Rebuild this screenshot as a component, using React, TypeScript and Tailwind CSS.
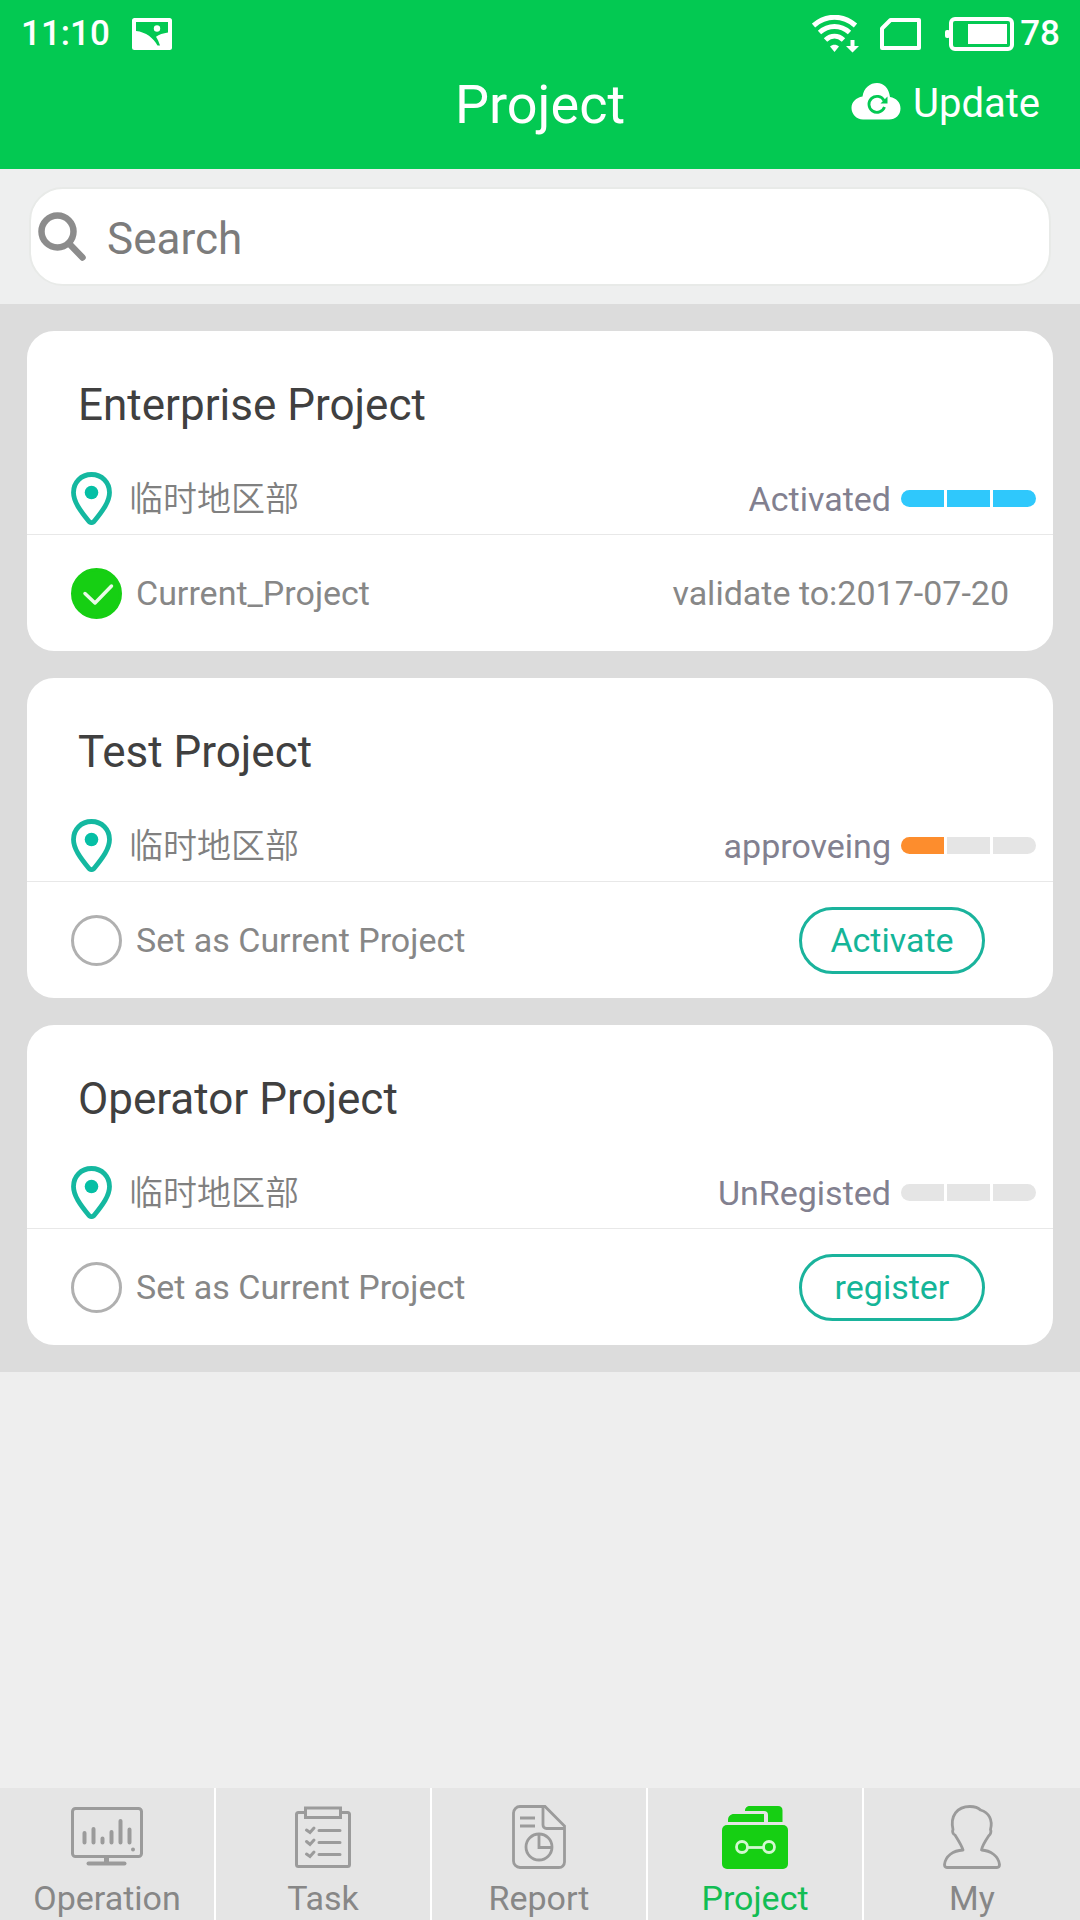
import { useState } from "react";

type Project = {
  id: string;
  name: string;
  region: string;
  status: string;
  segments: string[];
  validTo?: string;
  action?: string;
};

const projects: Project[] = [
  {
    id: "enterprise",
    name: "Enterprise Project",
    region: "临时地区部",
    status: "Activated",
    segments: ["bg-[#2fc8fc]", "bg-[#2fc8fc]", "bg-[#2fc8fc]"],
    validTo: "2017-07-20",
  },
  {
    id: "test",
    name: "Test Project",
    region: "临时地区部",
    status: "approveing",
    segments: ["bg-[#fd8d2d]", "bg-[#e5e5e5]", "bg-[#e5e5e5]"],
    action: "Activate",
  },
  {
    id: "operator",
    name: "Operator Project",
    region: "临时地区部",
    status: "UnRegisted",
    segments: ["bg-[#e5e5e5]", "bg-[#e5e5e5]", "bg-[#e5e5e5]"],
    action: "register",
  },
];

function PhotoIcon() {
  return (
    <svg width="40" height="32" viewBox="0 0 40 32" aria-hidden="true">
      <rect width="40" height="32" rx="2.5" fill="#fff" />
      <path d="M4 4h32v10.500c-5 .7-9 2-12 4.200 1.600 2.500 3 5.500 4 8.800h-2.500C21.500 20 14 14 4 13z" fill="#03c952" />
      <circle cx="25" cy="10.500" r="3.200" fill="#fff" />
    </svg>
  );
}

function WifiIcon() {
  return (
    <svg width="48" height="38" viewBox="0 0 48 38" fill="none" stroke="#fff" aria-hidden="true">
      <path d="M1.500 10.500C14 -0.500 31 -0.500 43.500 10.500" strokeWidth="5" />
      <path d="M7.500 17.500c9-8 21-8 30 0" strokeWidth="5" />
      <path d="M13.500 25c5.500-5 12.500-5 18 0" strokeWidth="5" />
      <path d="M18 31.500c2.500-2.500 6.500-2.500 9 0L22.500 37z" fill="#fff" stroke="none" />
      <path d="M38.500 25h4v6H47l-6.500 6.500L34 31h4.500z" fill="#fff" stroke="none" />
    </svg>
  );
}

function SimIcon() {
  return (
    <svg width="41" height="32" viewBox="0 0 41 32" fill="none" aria-hidden="true">
      <path d="M2 30V10.500L10.500 2H39v28z" stroke="#fff" strokeWidth="4" strokeLinejoin="round" />
    </svg>
  );
}

function BatteryIcon() {
  return (
    <svg width="69" height="34" viewBox="0 0 69 34" fill="none" aria-hidden="true">
      <rect x="6" y="2" width="61" height="30" rx="4" stroke="#fff" strokeWidth="4" />
      <rect y="13" width="5" height="8" rx="2" fill="#fff" />
      <rect x="23" y="7" width="39" height="20" fill="#fff" />
    </svg>
  );
}

function CloudRefreshIcon() {
  return (
    <svg className="mb-1" width="50" height="37" viewBox="0 0 50 37" fill="none" aria-hidden="true">
      <path d="M12 36.500h26c6.500 0 11.500-4.500 11.500-11 0-6-4-10.500-10.500-11.500C38 5.500 33 0 26 0S13 4.500 11.500 13.500C5 14.500.5 19 .5 25S5.500 36.500 12 36.500z" fill="#fff" />
      <path d="M33 17.500A8 8 0 1 0 33.500 24" stroke="#03c952" strokeWidth="2.800" />
      <path d="M29.500 20.500h7V13.500z" fill="#03c952" />
    </svg>
  );
}

function SearchIcon() {
  return (
    <svg className="shrink-0" width="48" height="50" viewBox="0 0 48 50" fill="none" stroke="#8c8c8c" aria-hidden="true">
      <circle cx="19.500" cy="19.500" r="16" strokeWidth="6.500" />
      <path d="M31 31.500L44.500 45.500" strokeWidth="6.500" strokeLinecap="round" />
    </svg>
  );
}

function PinIcon() {
  return (
    <svg width="41" height="53" viewBox="0 0 41 53" fill="none" aria-hidden="true">
      <path d="M20.500 2.500C10 2.500 2.500 10.500 2.500 20.500c0 9 6.500 18 15.500 29 1.500 1.500 3.500 1.500 5 0 9-11 15.500-20 15.500-29 0-10-7.500-18-18-18z" stroke="#14b8a0" strokeWidth="4.800" />
      <circle cx="20.500" cy="20.500" r="6.800" fill="#05bfa5" />
    </svg>
  );
}

function OperationIcon() {
  return (
    <svg width="72" height="60" viewBox="0 0 72 60" fill="none" stroke="#9b9b9b" aria-hidden="true">
      <rect x="1.500" y="1.500" width="69" height="48" rx="3" strokeWidth="3" />
      <path d="M13.500 26v9.500M22.500 22v13.500M31.500 31.500v4M40.500 25v10.500M49.500 14v21.500M58.500 22.500v13" strokeWidth="4" strokeLinecap="round" />
      <path d="M35.500 50v6" strokeWidth="5" />
      <path d="M17.500 56.500h36" strokeWidth="4" strokeLinecap="round" />
      <circle cx="62" cy="42.500" r="2" fill="#9b9b9b" stroke="none" />
    </svg>
  );
}

function TaskIcon() {
  return (
    <svg width="56" height="63" viewBox="0 0 56 63" fill="none" stroke="#9b9b9b" strokeWidth="3" aria-hidden="true">
      <path d="M10 6.500H3.500a2 2 0 0 0-2 2v50a2 2 0 0 0 2 2h49a2 2 0 0 0 2-2v-50a2 2 0 0 0-2-2H46" />
      <rect x="10.500" y="2" width="35" height="9.500" />
      <path d="M24 24.500h21M24 36.500h21M24 48.500h21" strokeLinecap="round" />
      <path d="M11.500 24l3.500 2.500 4-4.500M11.500 35.500L15 38.500l4-4.500M11.500 48l3.500 2.500 4-4.500" strokeLinecap="round" />
    </svg>
  );
}

function ReportIcon() {
  return (
    <svg width="54" height="64" viewBox="0 0 54 64" fill="none" stroke="#9b9b9b" strokeWidth="2.800" aria-hidden="true">
      <path d="M8 1.500h25L52.500 21v36a5.500 5.500 0 0 1-5.500 5.500H8A6.500 6.500 0 0 1 1.500 56V8A6.500 6.500 0 0 1 8 1.500z" />
      <path d="M31 1.500V20a3.500 3.500 0 0 0 3.500 3.500h18" />
      <path d="M8 13h15M8 21h15" />
      <circle cx="27" cy="42" r="13" />
      <path d="M27 29.500V42.500h13" />
    </svg>
  );
}

function ProjectIcon() {
  return (
    <svg width="66" height="64" viewBox="0 0 66 64" fill="none" aria-hidden="true">
      <path d="M23 6c0-3.500 2-5 5-5h28c3 0 4.500 1.500 4.500 4.500V17H46V10c0-3-1.500-4-4-4z" fill="#16cf13" />
      <path d="M6 17v-2c0-3.500 2.500-6 6-6h30v8z" fill="#16cf13" />
      <rect y="20" width="66" height="44" rx="5" fill="#16cf13" />
      <g stroke="#d2f8d0" strokeWidth="2.800">
        <circle cx="20" cy="42" r="5.500" />
        <circle cx="47" cy="42" r="5.500" />
        <path d="M25.500 42.500h16" />
      </g>
    </svg>
  );
}

function PersonIcon() {
  return (
    <svg width="58" height="64" viewBox="0 0 58 64" fill="none" stroke="#9b9b9b" strokeWidth="2.800" strokeLinejoin="round" aria-hidden="true">
      <path d="M20 45c-1.500-5-5-10-8-15-2-.5-3-3.500-2-5.500C7 11 14 1.500 27 1.500c5 0 8 1 10.500 3.500C46 7.500 50 15 47.500 24.500c1 2 0 5-1.500 6-3 4.500-6.500 9.500-7.500 14.500 9 .5 17 6 18 14.500 0 2-.5 3-2.500 3H4c-2 0-2.500-1-2.500-3C2.500 51 10 45.500 20 45z" />
    </svg>
  );
}

const tabs = [
  { label: "Operation", icon: OperationIcon },
  { label: "Task", icon: TaskIcon },
  { label: "Report", icon: ReportIcon },
  { label: "Project", icon: ProjectIcon },
  { label: "My", icon: PersonIcon },
];

function StatusBar() {
  return (
    <div className="flex h-[67px] items-center justify-between pr-5 pl-[21px] text-[35px] leading-10 font-medium">
      <div className="flex items-center gap-[22px]">
        <span>11:10</span>
        <PhotoIcon />
      </div>
      <div className="flex items-center">
        <WifiIcon />
        <span className="ml-5">
          <SimIcon />
        </span>
        <span className="mr-[6px] ml-6">
          <BatteryIcon />
        </span>
        <span>78</span>
      </div>
    </div>
  );
}

function StatusMeter({ segments }: { segments: string[] }) {
  return (
    <div className="flex h-[17px] w-[135px] gap-[3px] overflow-hidden rounded-full">
      {segments.map((color, index) => (
        <span key={index} className={`flex-1 ${color}`} />
      ))}
    </div>
  );
}

function ProjectCard({ project, current, onSelect }: { project: Project; current: boolean; onSelect: () => void }) {
  return (
    <article className="rounded-[27px] bg-white">
      <div className="border-b border-[#e8e8e8] pt-12 pb-[5px]">
        <h2 className="pl-[51px] text-[44px] leading-[52px] text-[#404040]">{project.name}</h2>
        <div className="mt-9 flex h-[62px] items-center justify-between pr-[17px] pl-11">
          <div className="flex items-center gap-[17px]">
            <PinIcon />
            <span className="pt-0.5 text-[34px] leading-10 font-[350] text-[#808080]">{project.region}</span>
          </div>
          <div className="flex items-center gap-[10px]">
            <span className="pt-0.5 text-[34px] leading-10 text-[#82808f]">{project.status}</span>
            <StatusMeter segments={project.segments} />
          </div>
        </div>
      </div>
      <div className="flex h-[116px] items-center justify-between pl-11 text-[34px] leading-10 text-[#878787]">
        <label className="flex items-center gap-[14px]">
          <span className="grid">
            <input
              type="radio"
              name="current-project"
              checked={current}
              onChange={onSelect}
              className="peer col-start-1 row-start-1 size-[51px] appearance-none rounded-full border-3 border-[#b0b0b0] checked:border-[#16cf13] checked:bg-[#16cf13]"
            />
            <svg className="pointer-events-none col-start-1 row-start-1 hidden peer-checked:block" width="51" height="51" viewBox="0 0 51 51" fill="none" aria-hidden="true">
              <path d="M14 25.500l10 9.500 16.500-17" stroke="#e9fbe8" strokeWidth="3.500" strokeLinecap="round" strokeLinejoin="round" />
            </svg>
          </span>
          {current ? "Current_Project" : "Set as Current Project"}
        </label>
        {project.validTo ? <span className="pr-11">validate to:{project.validTo}</span> : null}
        {project.action ? (
          <button type="button" className="mr-[68px] h-[67px] w-[186px] rounded-full border-3 border-[#1ab39c] text-[#14b598]">
            {project.action}
          </button>
        ) : null}
      </div>
    </article>
  );
}

export default function App() {
  const [currentId, setCurrentId] = useState("enterprise");
  const [query, setQuery] = useState("");

  const visible = projects.filter((project) => project.name.toLowerCase().includes(query.toLowerCase()));

  return (
    <div className="flex min-h-screen flex-col bg-[#eeeeee] font-['Roboto','Noto_Sans_CJK_SC',sans-serif]">
      <header className="bg-[#03c952] pb-[26px] text-white">
        <StatusBar />
        <div className="grid h-[76px] grid-cols-3 items-center">
          <h1 className="col-start-2 text-center text-[54px] leading-[76px]">Project</h1>
          <button type="button" className="flex items-center gap-3 justify-self-end pr-10 pb-[3px] text-[40px] leading-[48px]">
            <CloudRefreshIcon />
            Update
          </button>
        </div>
      </header>

      <div className="bg-[#eeefef] px-[29px] pt-[18px] pb-[18px]">
        <label className="flex h-[99px] items-center gap-[21px] rounded-[34px] border-2 border-[#e8eae8] bg-white pl-[7px]">
          <SearchIcon />
          <input
            type="text"
            aria-label="Search"
            placeholder="Search"
            value={query}
            onChange={(event) => setQuery(event.target.value)}
            className="w-full bg-transparent pt-1 text-[44px] leading-[52px] text-[#404040] outline-none placeholder:text-[#7c7c7c]"
          />
        </label>
      </div>

      <main className="flex flex-col gap-[27px] bg-[#dcdcdc] p-[27px]">
        {visible.map((project) => (
          <ProjectCard
            key={project.id}
            project={project}
            current={project.id === currentId}
            onSelect={() => setCurrentId(project.id)}
          />
        ))}
      </main>

      <nav className="mt-auto grid grid-cols-5 divide-x-2 divide-white bg-[#e5e5e5]">
        {tabs.map(({ label, icon: Icon }) => (
          <a
            key={label}
            href={`#${label.toLowerCase()}`}
            aria-current={label === "Project" ? "page" : undefined}
            className="flex h-[132px] flex-col items-center pt-[17px] text-[34px] leading-10 text-[#878787] aria-[current=page]:text-[#12bd54]"
          >
            <span className="flex h-16 items-center">
              <Icon />
            </span>
            <span className="mt-[9px]">{label}</span>
          </a>
        ))}
      </nav>
    </div>
  );
}
